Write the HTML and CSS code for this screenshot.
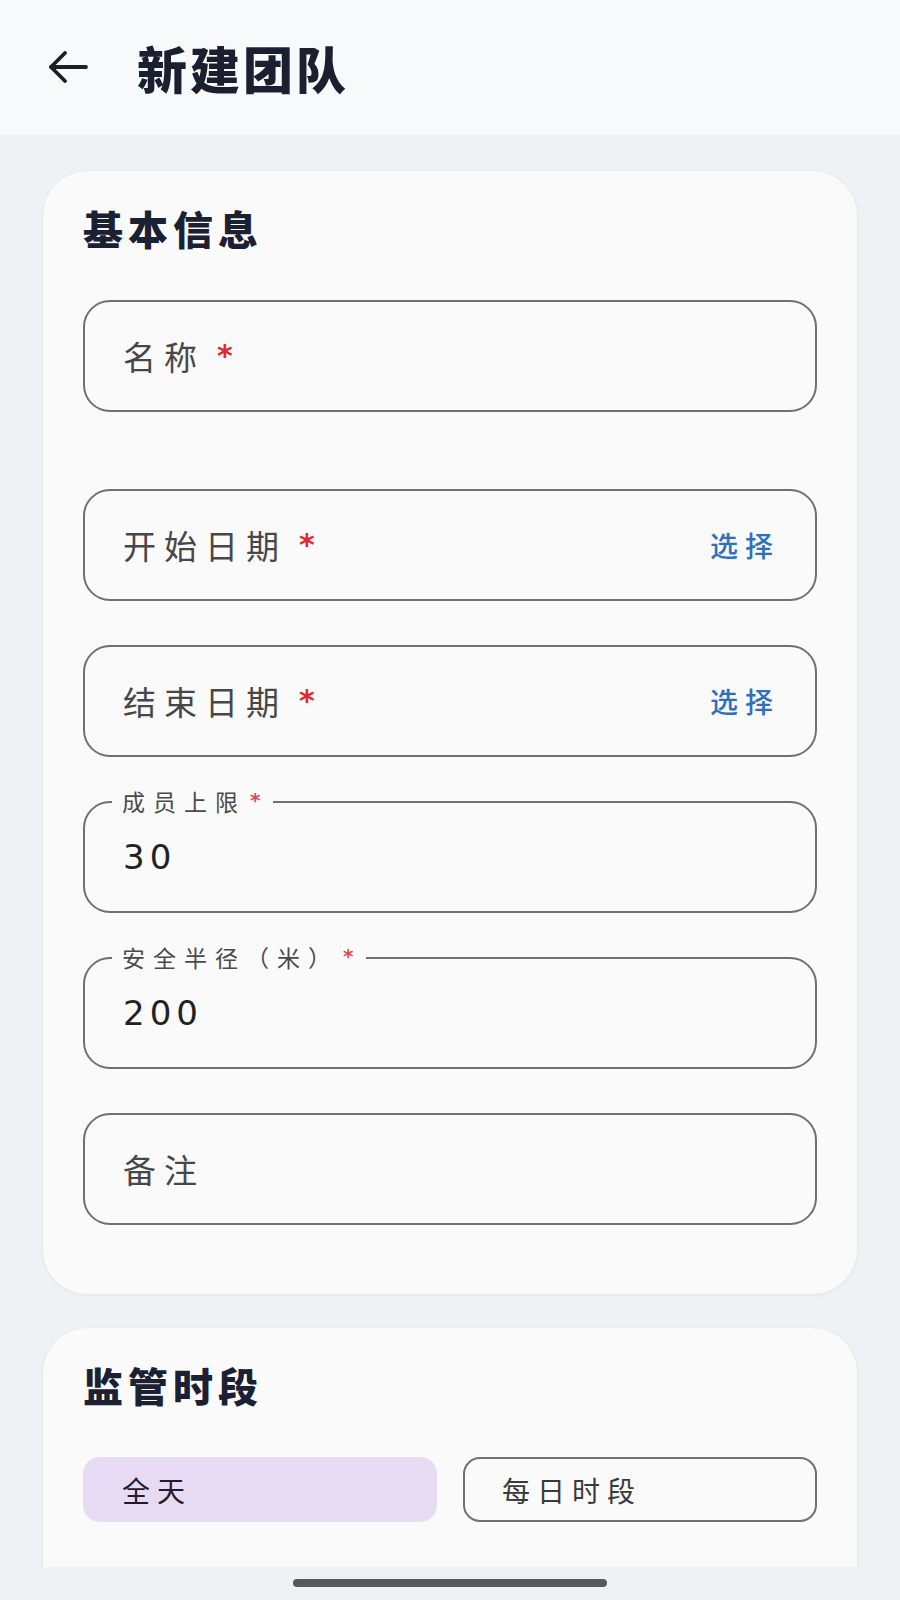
FILE: index.html
```html
<!DOCTYPE html>
<html lang="zh-CN">
<head>
<meta charset="utf-8">
<title>新建团队</title>
<link rel="stylesheet" href="styles.css">
</head>
<body>
<div class="app">
  <header class="topbar">
    <button class="back" aria-label="返回">
      <svg width="40" height="32" viewBox="0 0 40 32" fill="none" stroke="#1c1f26" stroke-width="3.8" stroke-linecap="round" stroke-linejoin="round">
        <path d="M38 16H3"/>
        <path d="M17 2L3 16l14 14"/>
      </svg>
    </button>
    <h1 class="title">新建团队</h1>
  </header>

  <main class="content">
    <section class="card">
      <h2 class="card-title">基本信息</h2>
      <div class="fields">
        <div class="field field-first">
          <span class="label">名称<span class="req">*</span></span>
        </div>
        <div class="field">
          <span class="label">开始日期<span class="req">*</span></span>
          <span class="action">选择</span>
        </div>
        <div class="field">
          <span class="label">结束日期<span class="req">*</span></span>
          <span class="action">选择</span>
        </div>
        <div class="field">
          <span class="float-label">成员上限<span class="req-sm">*</span></span>
          <span class="value">30</span>
        </div>
        <div class="field">
          <span class="float-label">安全半径（米）<span class="req-sm">*</span></span>
          <span class="value">200</span>
        </div>
        <div class="field">
          <span class="label">备注</span>
        </div>
      </div>
    </section>

    <section class="card card-second">
      <h2 class="card-title">监管时段</h2>
      <div class="segments">
        <button class="seg seg-active">全天</button>
        <button class="seg">每日时段</button>
      </div>
    </section>
  </main>

  <div class="navbar"><span class="pill"></span></div>
</div>
</body>
</html>
```

FILE: styles.css
```css
* { box-sizing: border-box; }

html, body {
  margin: 0;
  padding: 0;
}

body {
  background: #eff1f5;
  font-family: "Noto Sans CJK SC", "Noto Sans", Roboto, sans-serif;
  color: #222;
}

.app {
  position: relative;
  width: 900px;
  height: 1600px;
  overflow: hidden;
  background: #eff1f5;
}

/* Header */
.topbar {
  height: 135px;
  background: #f8f9fa;
  display: flex;
  align-items: center;
  padding-left: 48px;
  padding-bottom: 2px;
}

.back {
  border: 0;
  background: none;
  padding: 0;
  margin: 0;
  width: 40px;
  height: 32px;
  display: flex;
}

.title {
  margin: 0 0 0 49px;
  font-size: 50px;
  line-height: 56px;
  font-weight: 900;
  letter-spacing: 3px;
  color: #1b2030;
}

/* Content */
.content {
  padding: 35px 42px 0;
  display: flex;
  flex-direction: column;
  gap: 32px;
}

.card {
  background: #fafafa;
  border: 1px solid #eaecf0;
  border-radius: 46px;
  padding: 34px 40px 69px;
  box-shadow: 0 1px 3px rgba(30, 40, 60, 0.05);
}

.card-title {
  margin: 0;
  font-size: 40px;
  line-height: 46px;
  font-weight: 900;
  letter-spacing: 5px;
  color: #1b2133;
}

.fields {
  margin-top: 49px;
  display: flex;
  flex-direction: column;
  gap: 44px;
}

.field {
  position: relative;
  height: 112px;
  border: 2px solid #707070;
  border-radius: 27px;
  padding: 0 42px 0 38px;
  display: flex;
  align-items: center;
  justify-content: space-between;
}

.field-first {
  margin-bottom: 33px;
}

.label {
  font-size: 33px;
  line-height: 40px;
  letter-spacing: 8px;
  color: #474747;
  display: flex;
  align-items: flex-start;
}

.req {
  color: #e3262f;
  font-family: "DejaVu Sans", sans-serif;
  font-weight: 700;
  font-size: 30px;
  line-height: 28px;
  letter-spacing: 0;
  margin-left: 12px;
  margin-top: 6px;
}

.action {
  font-size: 28px;
  line-height: 36px;
  font-weight: 500;
  letter-spacing: 7px;
  margin-right: -7px;
  color: #2f6fbf;
}

.float-label {
  position: absolute;
  top: -13px;
  left: 27px;
  padding: 0 13px 0 10px;
  background: #fafafa;
  font-size: 23px;
  line-height: 22px;
  letter-spacing: 8px;
  color: #4a4a4a;
  display: flex;
  align-items: flex-start;
}

.req-sm {
  color: #de4a55;
  font-family: "DejaVu Sans", sans-serif;
  font-weight: 700;
  font-size: 20px;
  line-height: 17px;
  letter-spacing: 0;
  margin-left: 4px;
  margin-top: 2px;
}

.value {
  font-family: "DejaVu Sans", sans-serif;
  font-size: 34px;
  line-height: 40px;
  letter-spacing: 5px;
  color: #222;
}

/* Second card */
.card-second {
  padding-bottom: 120px;
}

.segments {
  margin-top: 49px;
  display: grid;
  grid-template-columns: 1fr 1fr;
  gap: 26px;
}

.seg {
  height: 65px;
  border: 2px solid #707070;
  border-radius: 17px;
  background: transparent;
  padding: 0 0 0 37px;
  margin: 0;
  text-align: left;
  font-family: "Noto Sans CJK SC", sans-serif;
  font-size: 28px;
  line-height: 36px;
  letter-spacing: 7px;
  color: #3a3a3a;
}

.seg-active {
  background: #e6dbf2;
  border-color: #e6dbf2;
  color: #241a30;
}

/* Gesture bar */
.navbar {
  position: absolute;
  left: 0;
  right: 0;
  bottom: 0;
  height: 33px;
  background: #eff1f5;
  display: flex;
  justify-content: center;
  padding-top: 12px;
}

.pill {
  width: 314px;
  height: 8px;
  border-radius: 4px;
  background: #56585d;
}
```
